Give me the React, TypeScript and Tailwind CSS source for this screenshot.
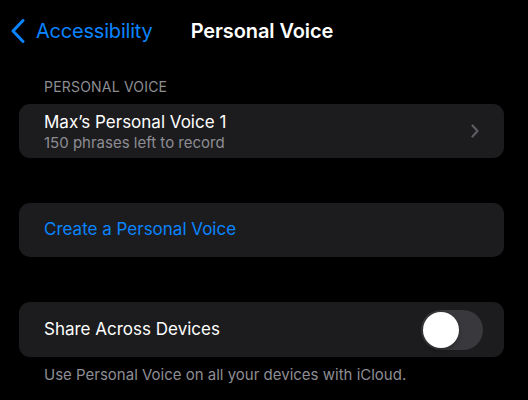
const font = { fontFamily: "Inter, 'Noto Sans', sans-serif" };

const App = () => {
  return (
    <div className="w-[528px] h-[400px] bg-black overflow-hidden" style={font}>
      {/* Navigation bar */}
      <div className="flex items-center h-[62px] pl-[11px]">
        <div className="flex items-center text-[#0a84ff]">
          <svg width="14" height="24" viewBox="0 0 14 24" fill="none">
            <polyline
              points="12,1.5 2,12 12,22.5"
              stroke="currentColor"
              strokeWidth="3"
              strokeLinecap="round"
              strokeLinejoin="round"
            />
          </svg>
          <span className="ml-[11px] text-[20px] tracking-[-0.2px]">Accessibility</span>
        </div>
        <span className="ml-[38px] text-[20px] font-semibold text-white tracking-[-0.1px]">
          Personal Voice
        </span>
      </div>

      <div className="px-[19px] pr-[24px]">
        <p className="pl-[25px] text-[14px] text-[#8d8d93] tracking-[0.2px] leading-none mt-[18px] mb-[10px]">
          PERSONAL VOICE
        </p>

        {/* Voice row */}
        <div className="flex items-center h-[54px] rounded-[11px] bg-[#1c1c1e] pl-[25px] pr-[25px]">
          <div className="flex flex-col flex-1">
            <span className="text-[17px] text-white leading-[22px]">Max’s Personal Voice 1</span>
            <span className="text-[15px] text-[#8d8d93] leading-[19px]">150 phrases left to record</span>
          </div>
          <svg width="8" height="14" viewBox="0 0 8 14" fill="none">
            <polyline
              points="1.5,1.5 6.5,7 1.5,12.5"
              stroke="#5b5b60"
              strokeWidth="2.2"
              strokeLinecap="round"
              strokeLinejoin="round"
            />
          </svg>
        </div>

        {/* Create row */}
        <div className="flex items-center h-[54px] mt-[45px] rounded-[11px] bg-[#1c1c1e] pl-[25px]">
          <span className="text-[17px] text-[#0a84ff]">Create a Personal Voice</span>
        </div>

        {/* Share row */}
        <div className="flex items-center h-[55px] mt-[45px] rounded-[11px] bg-[#1c1c1e] pl-[25px] pr-[21px]">
          <span className="flex-1 text-[17px] text-white">Share Across Devices</span>
          <div className="flex items-center w-[62px] h-[40px] rounded-full bg-[#39393d] p-[2px]">
            <div className="w-[36px] h-[36px] rounded-full bg-white shadow-[0_2px_4px_rgba(0,0,0,0.3)]" />
          </div>
        </div>

        <p className="pl-[25px] mt-[7px] text-[15px] text-[#8d8d93]">
          Use Personal Voice on all your devices with iCloud.
        </p>
      </div>
    </div>
  );
};

export default App;
